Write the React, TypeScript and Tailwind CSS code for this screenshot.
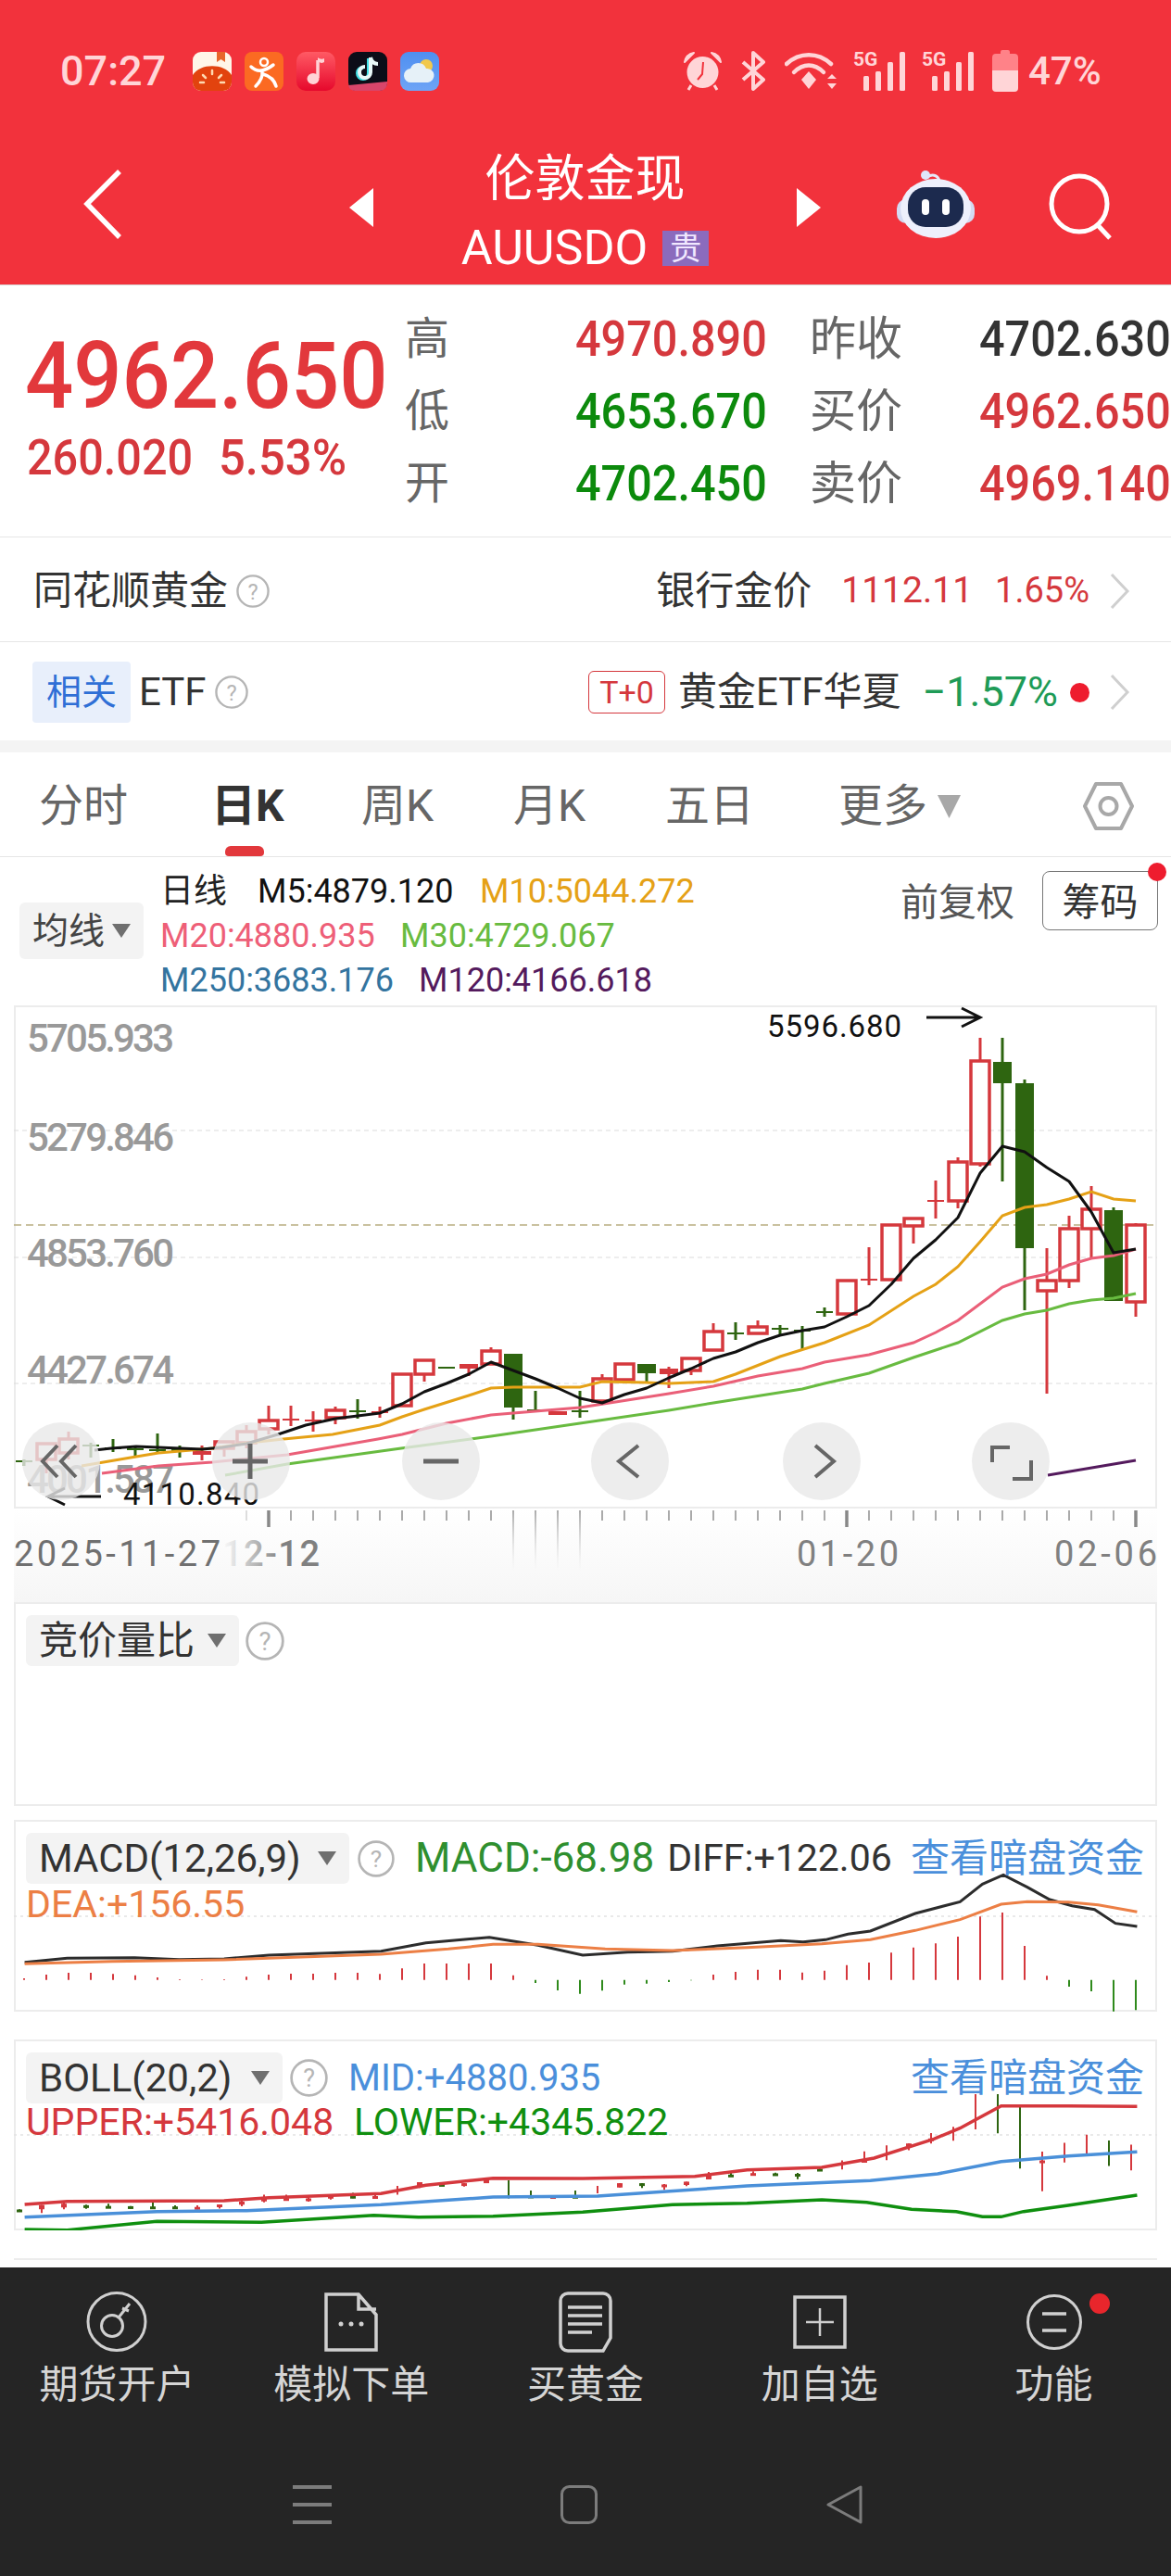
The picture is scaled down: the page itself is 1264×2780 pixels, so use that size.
import type { ReactNode } from "react";

// top, bottom, wick top, wick bottom, colour — one entry per trading day, 24px apart
type Candle = [number, number, number, number, "r" | "g"];

const candles: Candle[] = [
	[1576, 1578, 1575, 1582, "g"],
	[1558, 1575, 1558, 1590, "r"],
	[1553, 1568, 1545, 1575, "r"],
	[1559, 1561, 1557, 1573, "g"],
	[1562, 1564, 1553, 1567, "g"],
	[1563, 1565, 1562, 1572, "g"],
	[1564, 1566, 1547, 1567, "g"],
	[1564, 1566, 1560, 1573, "g"],
	[1566, 1570, 1560, 1576, "r"],
	[1556, 1563, 1556, 1572, "r"],
	[1545, 1557, 1538, 1563, "r"],
	[1533, 1542, 1517, 1548, "r"],
	[1531, 1533, 1517, 1539, "r"],
	[1532, 1534, 1523, 1545, "r"],
	[1522, 1530, 1518, 1537, "r"],
	[1522, 1524, 1510, 1531, "g"],
	[1523, 1525, 1518, 1530, "r"],
	[1483, 1517, 1483, 1517, "r"],
	[1468, 1483, 1468, 1491, "r"],
	[1475, 1477, 1475, 1477, "g"],
	[1472, 1477, 1472, 1485, "r"],
	[1458, 1472, 1454, 1472, "r"],
	[1461, 1519, 1461, 1532, "g"],
	[1521, 1523, 1501, 1523, "g"],
	[1523, 1527, 1523, 1527, "r"],
	[1522, 1524, 1501, 1530, "g"],
	[1488, 1512, 1483, 1512, "r"],
	[1472, 1489, 1472, 1489, "r"],
	[1472, 1482, 1472, 1491, "g"],
	[1477, 1483, 1475, 1498, "r"],
	[1466, 1479, 1466, 1484, "r"],
	[1437, 1457, 1428, 1457, "r"],
	[1438, 1440, 1427, 1446, "g"],
	[1432, 1439, 1425, 1439, "r"],
	[1433, 1435, 1430, 1442, "g"],
	[1435, 1437, 1431, 1456, "g"],
	[1415, 1417, 1411, 1421, "g"],
	[1382, 1418, 1382, 1418, "r"],
	[1380, 1382, 1346, 1387, "r"],
	[1322, 1381, 1322, 1381, "r"],
	[1315, 1323, 1315, 1342, "r"],
	[1295, 1297, 1274, 1315, "r"],
	[1254, 1296, 1249, 1304, "r"],
	[1145, 1256, 1120, 1259, "r"],
	[1146, 1169, 1120, 1275, "g"],
	[1169, 1347, 1165, 1414, "g"],
	[1382, 1393, 1347, 1504, "r"],
	[1326, 1382, 1312, 1390, "r"],
	[1305, 1326, 1280, 1358, "r"],
	[1306, 1404, 1303, 1404, "g"],
	[1322, 1405, 1320, 1421, "r"],
];

const m5 = [[102,1565],[120,1563],[147,1561],[194,1563],[218,1564],[240,1562],[266,1558],[300,1548],[330,1538],[362,1531],[386,1528],[410,1525],[434,1515],[458,1502],[482,1493],[506,1483],[530,1470],[554,1479],[578,1488],[602,1498],[626,1509],[650,1514],[674,1505],[698,1498],[722,1487],[746,1477],[770,1466],[794,1459],[818,1449],[842,1441],[866,1436],[890,1432],[914,1421],[938,1409],[962,1386],[986,1358],[1010,1338],[1034,1314],[1058,1266],[1082,1237],[1106,1243],[1130,1260],[1154,1275],[1178,1308],[1202,1352],[1226,1348]];
const m10 = [[88,1582],[147,1572],[171,1568],[230,1563],[269,1557],[306,1553],[359,1548],[410,1538],[434,1529],[458,1521],[506,1506],[530,1498],[554,1497],[626,1497],[650,1491],[698,1492],[722,1493],[770,1491],[794,1483],[842,1464],[890,1449],[938,1430],[986,1399],[1010,1386],[1034,1367],[1058,1340],[1082,1312],[1106,1303],[1130,1300],[1154,1294],[1178,1286],[1202,1294],[1226,1296]];
const m20 = [[110,1590],[171,1582],[229,1578],[310,1570],[408,1553],[434,1548],[482,1536],[530,1527],[626,1519],[722,1504],[770,1496],[818,1485],[866,1477],[890,1470],[938,1462],[986,1449],[1010,1438],[1034,1425],[1058,1407],[1082,1389],[1106,1380],[1130,1375],[1154,1365],[1178,1358],[1202,1355],[1226,1348]];
const m30 = [[243,1592],[310,1580],[433,1563],[530,1550],[626,1536],[722,1522],[770,1514],[866,1499],[890,1493],[938,1482],[986,1465],[1034,1449],[1082,1425],[1106,1418],[1130,1414],[1154,1407],[1178,1403],[1202,1401],[1226,1396]];

const diff = [[33,533],[90,520],[180,518],[240,524],[300,522],[360,510],[510,497],[570,470],[655,452],[720,478],[780,510],[840,500],[900,497],[960,480],[1045,463],[1075,467],[1105,460],[1135,442],[1165,432],[1225,375],[1285,337],[1315,280],[1343,250],[1375,290],[1405,330],[1435,350],[1465,362],[1493,407],[1522,417]];
const dea = [[33,538],[150,530],[300,525],[510,507],[600,490],[660,475],[720,475],[810,490],[900,495],[1000,485],[1100,473],[1165,460],[1225,430],[1285,395],[1340,345],[1375,337],[1430,338],[1470,347],[1522,370]];
const macdBars = [585,573,567,567,571,575,582,588,589,588,580,573,570,570,567,567,571,553,537,537,537,537,575,600,624,635,625,605,602,597,592,573,564,557,557,566,560,542,534,502,485,472,450,385,372,480,577,612,627,692,688];

const upper = [[33,1317],[90,1307],[300,1305],[360,1295],[510,1282],[570,1255],[660,1232],[780,1233],[930,1226],[1000,1205],[1100,1197],[1170,1167],[1250,1105],[1285,1070],[1340,998],[1430,998],[1522,1000]];
const mid = [[33,1358],[210,1340],[330,1337],[510,1318],[660,1293],[800,1290],[1000,1257],[1165,1240],[1255,1218],[1340,1178],[1430,1160],[1522,1147]];
const lower = [[33,1398],[90,1400],[210,1372],[350,1375],[500,1352],[560,1358],[660,1355],[780,1342],[900,1318],[1000,1313],[1100,1302],[1160,1310],[1220,1333],[1280,1340],[1315,1357],[1340,1357],[1370,1340],[1430,1320],[1522,1287]];

const pts = (a: number[][]) => a.map((p) => p.join(",")).join(" ");
// sub chart lines were read off a crop, turn them into page coordinates
const sub = (a: number[][]) => pts(a.map(([x, y]) => [x / 1.24, 1940 + y / 3]));
const candleX = (i: number) => 26 + 24 * i;
const RED = "#d5383d";
const GREEN = "#2e6510";

function Help({ size = 38 }: { size?: number }) {
	return (
		<svg width={size} height={size} viewBox="0 0 38 38" className="shrink-0">
			<circle cx="19" cy="19" r="17.500" fill="none" stroke="#b5b5b5" strokeWidth="2.500" />
			<text x="19" y="28" fontSize="25" fill="#b5b5b5" textAnchor="middle">?</text>
		</svg>
	);
}

function Chevron() {
	return (
		<svg width="22" height="38" viewBox="0 0 22 38" className="shrink-0">
			<path d="M2 1 L19 19 L2 37" fill="none" stroke="#cfcfcf" strokeWidth="3" />
		</svg>
	);
}

function Caret() {
	return (
		<svg width="20" height="15" viewBox="0 0 20 15" className="shrink-0">
			<path d="M0 0 H20 L10 15 Z" fill="#6f6f6f" />
		</svg>
	);
}

function Selector({ width, children }: { width: string; children: ReactNode }) {
	return (
		<div className={`flex h-[55px] shrink-0 items-center justify-between rounded-md bg-[#f3f3f3] px-[14px] text-[42px] text-[#333] ${width}`}>
			<span className="whitespace-nowrap">{children}</span>
			<Caret />
		</div>
	);
}

function StatusBar() {
	const c = "#ffd5d7";
	return (
		<div className="flex h-[43px] items-center pl-[65px] text-[#ffd5d7]">
			<span className="w-[143px] text-[45px] font-medium leading-[43px]">07:27</span>
			<div className="flex gap-[14px]">
				<svg width="42" height="42" viewBox="0 0 42 42">
					<rect width="42" height="42" rx="9" fill="#fff6e8" />
					<path d="M0 25 C8 12 34 12 42 25 V33 a9 9 0 0 1 -9 9 H9 a9 9 0 0 1 -9 -9 Z" fill="#e2430e" />
					<path d="M26 0 H35 V11 L30.500 8 L26 11 Z" fill="#e8662a" />
					<path d="M21 20 V24 M11 25 L14 28 M31 25 L28 28 M8 33 H12 M30 33 H34" stroke="#ffd9b0" strokeWidth="2.500" strokeLinecap="round" />
				</svg>
				<svg width="42" height="42" viewBox="0 0 42 42">
					<rect width="42" height="42" rx="8" fill="#fb6a22" />
					<circle cx="21" cy="11" r="4" fill="none" stroke="#fff" strokeWidth="2.500" />
					<path d="M7 16 C14 23 22 21 31 14 M19 21 C20 28 16 33 12 37 M20 24 C27 26 32 30 34 37" fill="none" stroke="#fff" strokeWidth="3.500" strokeLinecap="round" />
				</svg>
				<svg width="42" height="42" viewBox="0 0 42 42">
					<defs>
						<linearGradient id="music" x1="0" y1="0" x2="0" y2="1">
							<stop offset="0" stopColor="#ff5a64" />
							<stop offset="1" stopColor="#e6082c" />
						</linearGradient>
					</defs>
					<rect width="42" height="42" rx="10" fill="url(#music)" />
					<path d="M23 9 V28" stroke="#ffd3d6" strokeWidth="3.500" />
					<path d="M23 9 C25 13 29 12 30 11 V7 C28 8 25 8 23 6 Z" fill="#ffd3d6" />
					<ellipse cx="18" cy="29" rx="6.500" ry="6" fill="#ffd3d6" />
				</svg>
				<svg width="42" height="42" viewBox="0 0 42 42">
					<rect width="42" height="42" rx="9" fill="#0c0d18" />
					<path d="M22 7 V23 a6 6 0 1 1 -6 -6" fill="none" stroke="#3fe0e6" strokeWidth="4" />
					<path d="M24 6 V22 a6 6 0 1 1 -6 -6" fill="none" stroke="#e8f8f8" strokeWidth="4" />
					<path d="M24 6 C25 11 28 13 32 13" fill="none" stroke="#e8f8f8" strokeWidth="4" />
					<path d="M0 36 L42 32 V34 a8 8 0 0 1 -8 8 H8 a8 8 0 0 1 -8 -6 Z" fill="#d8456a" />
				</svg>
				<svg width="42" height="42" viewBox="0 0 42 42">
					<defs>
						<linearGradient id="sky" x1="0" y1="0" x2="0" y2="1">
							<stop offset="0" stopColor="#4f8ff0" />
							<stop offset="1" stopColor="#6ea4f6" />
						</linearGradient>
					</defs>
					<rect width="42" height="42" rx="9" fill="url(#sky)" />
					<circle cx="28" cy="15" r="7" fill="#f2c94c" />
					<path d="M12 33 a7.500 7.500 0 0 1 -1 -15 a9 9 0 0 1 17 0 a7.500 7.500 0 0 1 2 15 Z" fill="#e6f1f8" />
				</svg>
			</div>
			<div className="ml-[263px] flex items-center">
				<svg width="43" height="43" viewBox="0 0 43 43">
					<circle cx="21.500" cy="23" r="17" fill={c} />
					<path d="M2 12 C3 6 7 3 12 2 Z M41 12 C40 6 36 3 31 2 Z" fill={c} stroke={c} strokeWidth="2" strokeLinejoin="round" />
					<path d="M9 37 L6 42 M34 37 L37 42" stroke={c} strokeWidth="3" />
					<path d="M22 12 L21 25 L16 31" fill="none" stroke="#f2323c" strokeWidth="2" />
				</svg>
				<svg width="27" height="43" viewBox="0 0 27 43" className="ml-[20px]">
					<path d="M2 12 L24 31 L13 41 V2 L24 12 L2 31" fill="none" stroke={c} strokeWidth="4" strokeLinejoin="round" />
				</svg>
				<svg width="58" height="43" viewBox="0 0 58 43" className="ml-[20px]">
					<path d="M2 14 C16 1 36 1 50 14" fill="none" stroke={c} strokeWidth="4.500" strokeLinecap="round" />
					<path d="M10 23 C20 13 32 13 42 23" fill="none" stroke={c} strokeWidth="4.500" strokeLinecap="round" />
					<path d="M18 31 L26 22 L34 31 L26 41 Z" fill={c} />
					<path d="M46 30 L51 25 L56 30 Z M46 35 L51 41 L56 35 Z" fill={c} />
				</svg>
				{[0, 1].map((n) => (
					<div key={n} className={`relative h-[43px] w-[56px] ${n === 0 ? "ml-[16px]" : "ml-[18px]"}`}>
						<span className="absolute left-0 top-0 text-[21px] font-bold leading-[19px]">5G</span>
						<svg width="56" height="43" viewBox="0 0 56 43">
							<rect x="11" y="27" width="6" height="16" rx="1.500" fill={c} />
							<rect x="24" y="22" width="6" height="21" rx="1.500" fill={c} />
							<rect x="37" y="12" width="6" height="31" rx="1.500" fill={c} />
							<rect x="50" y="1" width="6" height="42" rx="1.500" fill={c} />
						</svg>
					</div>
				))}
				<svg width="28" height="45" viewBox="0 0 28 45" className="ml-[20px]">
					<path d="M9 4 V2 a2 2 0 0 1 2 -2 H17 a2 2 0 0 1 2 2 V4 H24 a4 4 0 0 1 4 4 V22 H0 V8 a4 4 0 0 1 4 -4 Z" fill="#ff8288" />
					<path d="M0 22 H28 V41 a4 4 0 0 1 -4 4 H4 a4 4 0 0 1 -4 -4 Z" fill={c} />
				</svg>
				<span className="ml-[11px] text-[42px] font-medium leading-[43px]">47%</span>
			</div>
		</div>
	);
}

function Robot() {
	return (
		<svg width="84" height="75" viewBox="0 0 84 75" className="ml-[82px] mt-[18px] shrink-0">
			<path d="M33 8 C40 3 46 8 46 14" fill="none" stroke="#e6e8f8" strokeWidth="3" />
			<circle cx="31" cy="6" r="5" fill="#dfe6fb" />
			<rect x="0" y="32" width="84" height="26" rx="10" fill="#d4daf2" />
			<ellipse cx="42" cy="42" rx="38" ry="32" fill="#eef0fc" />
			<rect x="12" y="19" width="60" height="43" rx="19" fill="#1c2a4e" />
			<rect x="27" y="32" width="8" height="17" rx="4" fill="#fff" />
			<rect x="49" y="32" width="8" height="17" rx="4" fill="#fff" />
		</svg>
	);
}

function Header() {
	return (
		<header className="h-[308px] border-b border-[#d9d9d9] bg-[#f2323c] pt-[55px] text-white">
			<StatusBar />
			<div className="mt-[67px] flex items-start">
				<svg width="41" height="75" viewBox="0 0 41 75" className="ml-[90px] mt-[18px] shrink-0">
					<path d="M39 2 L4 37 L39 73" fill="none" stroke="#fff" strokeWidth="5.500" />
				</svg>
				<svg width="26" height="42" viewBox="0 0 26 42" className="ml-[246px] mt-[38px] shrink-0">
					<path d="M26 0 V42 L0 21 Z" fill="#fff" />
				</svg>
				<div className="flex w-[457px] shrink-0 flex-col items-center pt-[3px]">
					<div className="text-[54px] leading-[52px]">伦敦金现</div>
					<div className="mt-[29px] flex h-[38px] items-center gap-[16px]">
						<span className="text-[52px] leading-[38px]">AUUSDO</span>
						<span className="flex h-[38px] w-[50px] items-center justify-center bg-[#8b6bbd] text-[34px] leading-[38px] text-[#f1e8ff]">贵</span>
					</div>
				</div>
				<svg width="26" height="42" viewBox="0 0 26 42" className="mt-[38px] shrink-0">
					<path d="M0 0 V42 L26 21 Z" fill="#fff" />
				</svg>
				<Robot />
				<svg width="70" height="72" viewBox="0 0 70 72" className="ml-[80px] mt-[22px] shrink-0">
					<circle cx="33" cy="33" r="30" fill="none" stroke="#fff" strokeWidth="5" />
					<path d="M52 55 L66 70" stroke="#fff" strokeWidth="5" />
				</svg>
			</div>
		</header>
	);
}

function Num({ children, className }: { children: ReactNode; className: string }) {
	return <span className={`inline-block origin-left scale-x-90 whitespace-nowrap text-[54px] font-medium leading-[78px] ${className}`}>{children}</span>;
}

function QuoteRow({ a, b, c, d, bColor, dColor }: { a: string; b: string; c: string; d: string; bColor: string; dColor: string }) {
	return (
		<div className="flex h-[78px] items-center">
			<span className="w-[184px] shrink-0 text-[48px] leading-[78px] text-[#666]">{a}</span>
			<span className="w-[253px] shrink-0"><Num className={bColor}>{b}</Num></span>
			<span className="w-[183px] shrink-0 text-[50px] leading-[78px] text-[#666]">{c}</span>
			<span className="shrink-0"><Num className={dColor}>{d}</Num></span>
		</div>
	);
}

function Quote() {
	return (
		<section className="flex h-[272px] overflow-hidden border-b border-[#e6e6e6]">
			<div className="w-[437px] shrink-0 pl-[27px] pt-[61px]">
				<div className="origin-left scale-x-[.92] whitespace-nowrap text-[100px] font-medium leading-[73px] text-[#e2383c]">4962.650</div>
				<div className="mt-[33px] flex h-[38px] items-center pl-[2px] text-[#d5383d]">
					<span className="w-[207px] origin-left scale-x-90 whitespace-nowrap text-[54px] font-medium leading-[38px]">260.020</span>
					<span className="origin-left scale-x-[.94] whitespace-nowrap text-[54px] font-medium leading-[38px]">5.53%</span>
				</div>
			</div>
			<div className="pt-[19px]">
				<QuoteRow a="高" b="4970.890" c="昨收" d="4702.630" bColor="text-[#d5383d]" dColor="text-[#333]" />
				<QuoteRow a="低" b="4653.670" c="买价" d="4962.650" bColor="text-[#0c8a0c]" dColor="text-[#d5383d]" />
				<QuoteRow a="开" b="4702.450" c="卖价" d="4969.140" bColor="text-[#0c8a0c]" dColor="text-[#d5383d]" />
			</div>
		</section>
	);
}

function InfoRows() {
	return (
		<>
			<div className="flex h-[113px] items-center border-b border-[#e6e6e6] pl-[36px] pr-[44px] pt-[3px] text-[#333]">
				<span className="text-[42px] leading-[46px]">同花顺黄金</span>
				<span className="ml-[9px]"><Help size={36} /></span>
				<span className="ml-auto text-[42px] leading-[46px]">银行金价</span>
				<span className="ml-[32px] text-[39px] text-[#d5383d]">1112.11</span>
				<span className="ml-[24px] text-[38px] text-[#d5383d]">1.65%</span>
				<span className="ml-[22px]"><Chevron /></span>
			</div>
			<div className="flex h-[106px] items-center pl-[35px] pr-[44px] pt-[2px] text-[#333]">
				<span className="flex h-[66px] w-[106px] items-center justify-center rounded bg-[#e8effb] text-[38px] text-[#2f6fd6]">相关</span>
				<span className="ml-[9px] text-[42px] leading-[46px]">ETF</span>
				<span className="ml-[9px]"><Help size={36} /></span>
				<span className="ml-auto flex h-[46px] w-[83px] items-center justify-center rounded-md border border-[#d5383d] text-[34px] text-[#d5383d]">T+0</span>
				<span className="ml-[14px] text-[42px] leading-[46px]">黄金ETF华夏</span>
				<span className="ml-[23px] text-[45px] leading-[46px] text-[#1e9b57]">−1.57%</span>
				<span className="ml-[13px] h-[21px] w-[21px] rounded-full bg-[#ee1c2e]" />
				<span className="ml-[22px]"><Chevron /></span>
			</div>
			<div className="h-[13px] bg-[#f4f4f4]" />
		</>
	);
}

function Tabs() {
	return (
		<nav className="relative flex h-[113px] items-center border-b border-[#e6e6e6] pl-[42px] pt-[4px] text-[48px] leading-[56px] text-[#666]">
			<span className="w-[186px] shrink-0">分时</span>
			<span className="w-[162px] shrink-0 font-bold text-[#333]">日K</span>
			<span className="w-[164px] shrink-0">周K</span>
			<span className="w-[164px] shrink-0">月K</span>
			<span className="w-[187px] shrink-0">五日</span>
			<span className="w-[107px] shrink-0">更多</span>
			<svg width="25" height="25" viewBox="0 0 25 25" className="shrink-0">
				<path d="M0 0 H25 L12.500 25 Z" fill="#a8a8a8" />
			</svg>
			<svg width="55" height="52" viewBox="0 0 55 52" className="ml-[132px] shrink-0">
				<path d="M14 2 H41 L53 26 L41 50 H14 L2 26 Z" fill="none" stroke="#a8a8a8" strokeWidth="4" strokeLinejoin="round" />
				<circle cx="27.500" cy="26" r="9" fill="none" stroke="#a8a8a8" strokeWidth="4" />
			</svg>
			<span className="absolute bottom-0 left-[243px] h-[11px] w-[42px] rounded-t-md rounded-b-sm bg-[#e2383c]" />
		</nav>
	);
}

function ChartHeader() {
	return (
		<div className="flex h-[160px] pl-[21px] text-[36px] leading-[48px]">
			<div className="mt-[49px] flex h-[61px] w-[134px] shrink-0 items-center justify-between rounded-md bg-[#f3f3f3] pl-[14px] pr-[14px] text-[39px] text-[#444]">
				均线
				<Caret />
			</div>
			<div className="ml-[18px] mt-[13px]">
				<div className="flex">
					<span className="w-[105px] text-[#222]">日线</span>
					<span className="w-[240px] text-[#111]">M5:4879.120</span>
					<span className="text-[#e5a116]">M10:5044.272</span>
				</div>
				<div className="flex">
					<span className="w-[259px] text-[#ee5f78]">M20:4880.935</span>
					<span className="text-[#68bb40]">M30:4729.067</span>
				</div>
				<div className="flex">
					<span className="w-[279px] text-[#33749f]">M250:3683.176</span>
					<span className="text-[#541a5d]">M120:4166.618</span>
				</div>
			</div>
			<div className="relative ml-auto mr-[14px] mt-[15px] flex h-[64px] items-center">
				<span className="pt-[3px] text-[41px] text-[#555]">前复权</span>
				<span className="ml-[30px] flex h-[64px] w-[125px] items-center justify-center rounded-lg border border-[#777] pt-[3px] text-[41px] text-[#333]">筹码</span>
				<span className="absolute -right-[9px] -top-[9px] h-[20px] w-[20px] rounded-full bg-[#ee1c2e]" />
			</div>
		</div>
	);
}

function MainCandles() {
	return (
		<>
			{candles.map(([top, bottom, wt, wb, color], i) => {
				const x = candleX(i);
				const stroke = color === "r" ? RED : GREEN;
				const solid = color === "g" || bottom - top <= 6;
				const half = bottom - top <= 3 ? 9 : 10;
				return (
					<g key={x} stroke={stroke}>
						<line x1={x} x2={x} y1={wt} y2={top} strokeWidth="3" />
						<line x1={x} x2={x} y1={bottom} y2={wb} strokeWidth="3" />
						{solid ? (
							<rect x={x - half} y={top} width={half * 2} height={Math.max(bottom - top, 2)} fill={stroke} stroke="none" />
						) : (
							<rect x={x - half} y={top} width={half * 2} height={bottom - top} fill="#fff" strokeWidth="3.500" />
						)}
					</g>
				);
			})}
		</>
	);
}

function MainChart() {
	const labels: [string, number][] = [
		["5705.933", 1135],
		["5279.846", 1242],
		["4853.760", 1367],
		["4427.674", 1493],
		["4001.587", 1611],
	];
	const buttons = ["left-[9px]", "left-[214px]", "left-[419px]", "left-[623px]", "left-[830px]", "left-[1034px]"];
	return (
		<div className="relative mx-[15px] h-[543px] w-[1234px] shadow-[inset_0_0_0_2px_#ececec]">
			<svg width="1234" height="543" viewBox="15 1085 1234 543" className="block">
				{[1220, 1357, 1493].map((y) => (
					<line key={y} x1="15" x2="1249" y1={y} y2={y} stroke="#dcdcdc" strokeWidth="1" strokeDasharray="5 4" />
				))}
				<line x1="15" x2="1249" y1="1322" y2="1322" stroke="#b8ad80" strokeWidth="1.500" strokeDasharray="8 5" />
				{labels.map(([t, y]) => (
					<text key={t} x="29" y={y} fontSize="42" fontWeight="500" fill="#999" textLength="159" lengthAdjust="spacing">{t}</text>
				))}
				<MainCandles />
				<polyline points={pts(m30)} fill="none" stroke="#68bb40" strokeWidth="3" />
				<polyline points={pts(m20)} fill="none" stroke="#ea5f78" strokeWidth="3" />
				<polyline points={pts(m10)} fill="none" stroke="#e5a116" strokeWidth="3" />
				<polyline points={pts(m5)} fill="none" stroke="#111" strokeWidth="3" strokeLinejoin="round" />
				<line x1="1131" y1="1592" x2="1226" y2="1576" stroke="#541a5d" strokeWidth="3" />
				<text x="828" y="1119" fontSize="33" fill="#111" textLength="145" lengthAdjust="spacing">5596.680</text>
				<path d="M1000 1098 H1058 M1038 1088 L1058 1098 L1038 1108" fill="none" stroke="#111" strokeWidth="3" />
				<text x="133" y="1624" fontSize="33" fill="#111" textLength="147" lengthAdjust="spacing">4110.840</text>
				<path d="M109 1615 H52 M70 1606 L52 1615 L70 1624" fill="none" stroke="#111" strokeWidth="3" />
			</svg>
			{buttons.map((b) => (
				<div key={b} className={`absolute top-[450px] h-[84px] w-[84px] rounded-full bg-[#e9e9e9]/80 ${b}`} />
			))}
			<svg width="1234" height="84" viewBox="15 1535 1234 84" className="absolute left-0 top-[450px]" fill="none" stroke="#666" strokeWidth="4">
				<path d="M62 1560 L46 1577 L62 1594 M82 1560 L66 1577 L82 1594" />
				<path d="M270 1558 V1596 M251 1577 H289" strokeWidth="5" />
				<path d="M457 1577 H495" strokeWidth="5" />
				<path d="M689 1560 L668 1577 L689 1594" />
				<path d="M880 1560 L900 1577 L880 1594" />
				<path d="M1071 1578 V1562 H1090 M1113 1576 V1596 H1093" />
			</svg>
		</div>
	);
}

function DateAxis() {
	const ticks = Array.from({ length: 41 }, (_, i) => 266 + 24 * i);
	const big = [290, 914, 1226];
	return (
		<div className="mx-[15px] h-[101px] w-[1234px] bg-linear-to-b from-white to-[#f6f6f6]">
			<svg width="1234" height="101" viewBox="15 1628 1234 101" className="block">
				<defs>
					<linearGradient id="dateFade" gradientUnits="userSpaceOnUse" x1="240" y1="0" x2="305" y2="0">
						<stop offset="0" stopColor="#808080" stopOpacity="0" />
						<stop offset="1" stopColor="#808080" />
					</linearGradient>
					<linearGradient id="smear" gradientUnits="userSpaceOnUse" x1="0" y1="1630" x2="0" y2="1695">
						<stop offset="0" stopColor="#aaa" />
						<stop offset="1" stopColor="#ddd" stopOpacity="0" />
					</linearGradient>
				</defs>
				{ticks.map((x) => {
					const long = big.includes(x);
					const smeared = x >= 554 && x <= 626;
					return (
						<line
							key={x}
							x1={x}
							x2={x}
							y1="1630"
							y2={smeared ? 1695 : long ? 1648 : 1641}
							stroke={smeared ? "url(#smear)" : long ? "#888" : x === 266 ? "#ddd" : "#aaa"}
							strokeWidth={long ? 3.500 : 2}
						/>
					);
				})}
				<text x="240" y="1690" fontSize="38" fontWeight="500" fill="url(#dateFade)" textLength="105" lengthAdjust="spacing">12-12</text>
				<text x="15" y="1690" fontSize="38" fill="#707070" textLength="223" lengthAdjust="spacing">2025-11-27</text>
				<text x="860" y="1690" fontSize="38" fill="#808080" textLength="110" lengthAdjust="spacing">01-20</text>
				<text x="1138" y="1690" fontSize="38" fill="#808080" textLength="111" lengthAdjust="spacing">02-06</text>
			</svg>
		</div>
	);
}

function AuctionPanel() {
	return (
		<div className="mx-[15px] h-[220px] w-[1234px] pl-[13px] pt-[14px] shadow-[inset_0_0_0_2px_#ececec]">
			<div className="flex items-center">
				<Selector width="w-[230px]">竞价量比</Selector>
				<span className="ml-[7px]"><Help size={42} /></span>
			</div>
		</div>
	);
}

function MacdPanel() {
	const zero = 590;
	return (
		<div className="relative mx-[15px] mt-[15px] h-[207px] w-[1234px] shadow-[inset_0_0_0_2px_#ececec]">
			<svg width="1234" height="207" viewBox="15 1964 1234 207" className="absolute left-0 top-0">
				<line x1="15" x2="1249" y1="2068" y2="2068" stroke="#e2e2e2" strokeWidth="1.500" strokeDasharray="3 4" />
				{macdBars.map((v, i) => (
					<line
						key={i}
						x1={candleX(i)}
						x2={candleX(i)}
						y1={1940 + zero / 3}
						y2={1940 + v / 3}
						stroke={v < zero ? "#d5383d" : "#2f8a1c"}
						strokeWidth="2"
					/>
				))}
				<polyline points={sub(diff)} fill="none" stroke="#2c2c2c" strokeWidth="3" />
				<polyline points={sub(dea)} fill="none" stroke="#ec7f45" strokeWidth="3" />
			</svg>
			<div className="relative pl-[13px] pt-[14px] text-[44px] leading-[55px]">
				<div className="flex items-center">
					<Selector width="w-[349px]">MACD(12,26,9)</Selector>
					<span className="ml-[9px]"><Help size={40} /></span>
					<span className="ml-[22px] whitespace-nowrap text-[#2f8f2f]">MACD:-68.98</span>
					<span className="ml-[14px] whitespace-nowrap text-[41px] text-[#333]">DIFF:+122.06</span>
					<span className="ml-auto mr-[14px] text-[42px] text-[#4a8fdb]">查看暗盘资金</span>
				</div>
				<div className="text-[41px] leading-[44px] text-[#ec7f45]">DEA:+156.55</div>
			</div>
		</div>
	);
}

function BollPanel() {
	const by = (y: number) => 2260 + (y - 1120) * 0.273;
	return (
		<div className="relative mx-[15px] mt-[30px] h-[206px] w-[1234px] shadow-[inset_0_0_0_2px_#ececec]">
			<svg width="1234" height="206" viewBox="15 2201 1234 206" className="absolute left-0 top-0">
				<line x1="15" x2="1249" y1="2304" y2="2304" stroke="#e2e2e2" strokeWidth="1.500" strokeDasharray="3 4" />
				{candles.map(([top, bottom, wt, wb, color], i) => {
					const x = candleX(i) - 5;
					const stroke = color === "r" ? "#d5383d" : GREEN;
					return (
						<g key={x} stroke={stroke}>
							<line x1={x} x2={x} y1={by(wt)} y2={by(wb)} strokeWidth="2" />
							<rect x={x - 3} y={by(top)} width="6" height={Math.max(by(bottom) - by(top), 3)} fill={stroke} fillOpacity={bottom - top > 20 ? 0 : 1} stroke="none" />
						</g>
					);
				})}
				<polyline points={sub(lower)} fill="none" stroke="#0f8f0f" strokeWidth="3.500" />
				<polyline points={sub(mid)} fill="none" stroke="#4a90d9" strokeWidth="3.500" />
				<polyline points={sub(upper)} fill="none" stroke="#d5383d" strokeWidth="3.500" />
			</svg>
			<div className="relative pl-[13px] pt-[14px] text-[41px] leading-[55px]">
				<div className="flex items-center">
					<Selector width="w-[277px]">BOLL(20,2)</Selector>
					<span className="ml-[8px]"><Help size={41} /></span>
					<span className="ml-[22px] whitespace-nowrap text-[40px] text-[#4a8fdb]">MID:+4880.935</span>
					<span className="ml-auto mr-[14px] text-[42px] text-[#4a8fdb]">查看暗盘资金</span>
				</div>
				<div className="flex leading-[40px]">
					<span className="w-[354px] whitespace-nowrap text-[#d5383d]">UPPER:+5416.048</span>
					<span className="whitespace-nowrap text-[#0f8f0f]">LOWER:+4345.822</span>
				</div>
			</div>
		</div>
	);
}

function FooterItem({ label, children }: { label: string; children: ReactNode }) {
	return (
		<div className="flex flex-col items-center">
			<div className="relative flex h-[67px] items-center justify-center">{children}</div>
			<span className="mt-[14px] whitespace-nowrap text-[42px] leading-[41px]">{label}</span>
		</div>
	);
}

function Footer() {
	return (
		<footer className="h-[333px] bg-[#252525] pt-[25px] text-[#d5d5d5]">
			<div className="grid grid-cols-5">
				<FooterItem label="期货开户">
					<svg width="66" height="67" viewBox="0 0 66 67" fill="none" stroke="#d0d0d0" strokeWidth="3">
						<circle cx="33" cy="33.500" r="31" />
						<circle cx="28" cy="38" r="11.500" />
						<path d="M35 29 L47 14 M39 19 L46 22" />
					</svg>
				</FooterItem>
				<FooterItem label="模拟下单">
					<svg width="58" height="64" viewBox="0 0 58 64" fill="none" stroke="#d0d0d0" strokeWidth="3.500">
						<path d="M2 2 H37 L56 24 V62 H2 Z M37 2 V18 H56" />
						<circle cx="18" cy="34" r="2.500" fill="#d0d0d0" stroke="none" />
						<circle cx="29" cy="34" r="2.500" fill="#d0d0d0" stroke="none" />
						<circle cx="40" cy="34" r="2.500" fill="#d0d0d0" stroke="none" />
					</svg>
				</FooterItem>
				<FooterItem label="买黄金">
					<svg width="58" height="66" viewBox="0 0 58 66" fill="none" stroke="#d0d0d0" strokeWidth="3.500">
						<path d="M10 2 H48 a8 8 0 0 1 8 8 V50 L48 64 H10 a8 8 0 0 1 -8 -8 V10 a8 8 0 0 1 8 -8 Z" />
						<path d="M10 17 H47 M10 26 H47 M10 35 H47 M10 44 H36" />
					</svg>
				</FooterItem>
				<FooterItem label="加自选">
					<svg width="58" height="58" viewBox="0 0 58 58" fill="none" stroke="#d0d0d0" strokeWidth="3.500">
						<rect x="2" y="2" width="54" height="54" />
						<path d="M29 14 V44 M14 29 H44" strokeWidth="2.500" />
					</svg>
				</FooterItem>
				<FooterItem label="功能">
					<svg width="60" height="62" viewBox="0 0 60 62" fill="none" stroke="#d0d0d0" strokeWidth="3">
						<circle cx="30" cy="31" r="28.500" />
						<path d="M17 22 H43 M17 40 H43" strokeWidth="3.500" />
					</svg>
					<span className="absolute -right-[30px] top-[3px] h-[22px] w-[22px] rounded-full bg-[#e8262c]" />
				</FooterItem>
			</div>
			<div className="mt-[88px] flex gap-[247px] pl-[316px]">
				<svg width="42" height="42" viewBox="0 0 42 42" fill="#7c7c7c">
					<rect y="0" width="42" height="4" />
					<rect y="19" width="42" height="4" />
					<rect y="38" width="42" height="4" />
				</svg>
				<svg width="40" height="42" viewBox="0 0 40 42" fill="none" stroke="#7c7c7c" strokeWidth="3">
					<rect x="1.500" y="1.500" width="37" height="39" rx="8" />
				</svg>
				<svg width="39" height="42" viewBox="0 0 39 42" fill="none" stroke="#7c7c7c" strokeWidth="3" strokeLinejoin="round">
					<path d="M37 2 V40 L2 21 Z" />
				</svg>
			</div>
		</footer>
	);
}

export default function App() {
	return (
		<div className="flex h-[2780px] w-[1264px] flex-col overflow-hidden bg-white [font-family:Roboto,'Noto_Sans_CJK_SC',sans-serif]">
			<Header />
			<Quote />
			<InfoRows />
			<Tabs />
			<ChartHeader />
			<MainChart />
			<DateAxis />
			<AuctionPanel />
			<MacdPanel />
			<BollPanel />
			<div className="mx-[15px] mt-[30px] h-[10px] w-[1234px] shrink-0 shadow-[inset_0_2px_0_0_#ececec]" />
			<Footer />
		</div>
	);
}
